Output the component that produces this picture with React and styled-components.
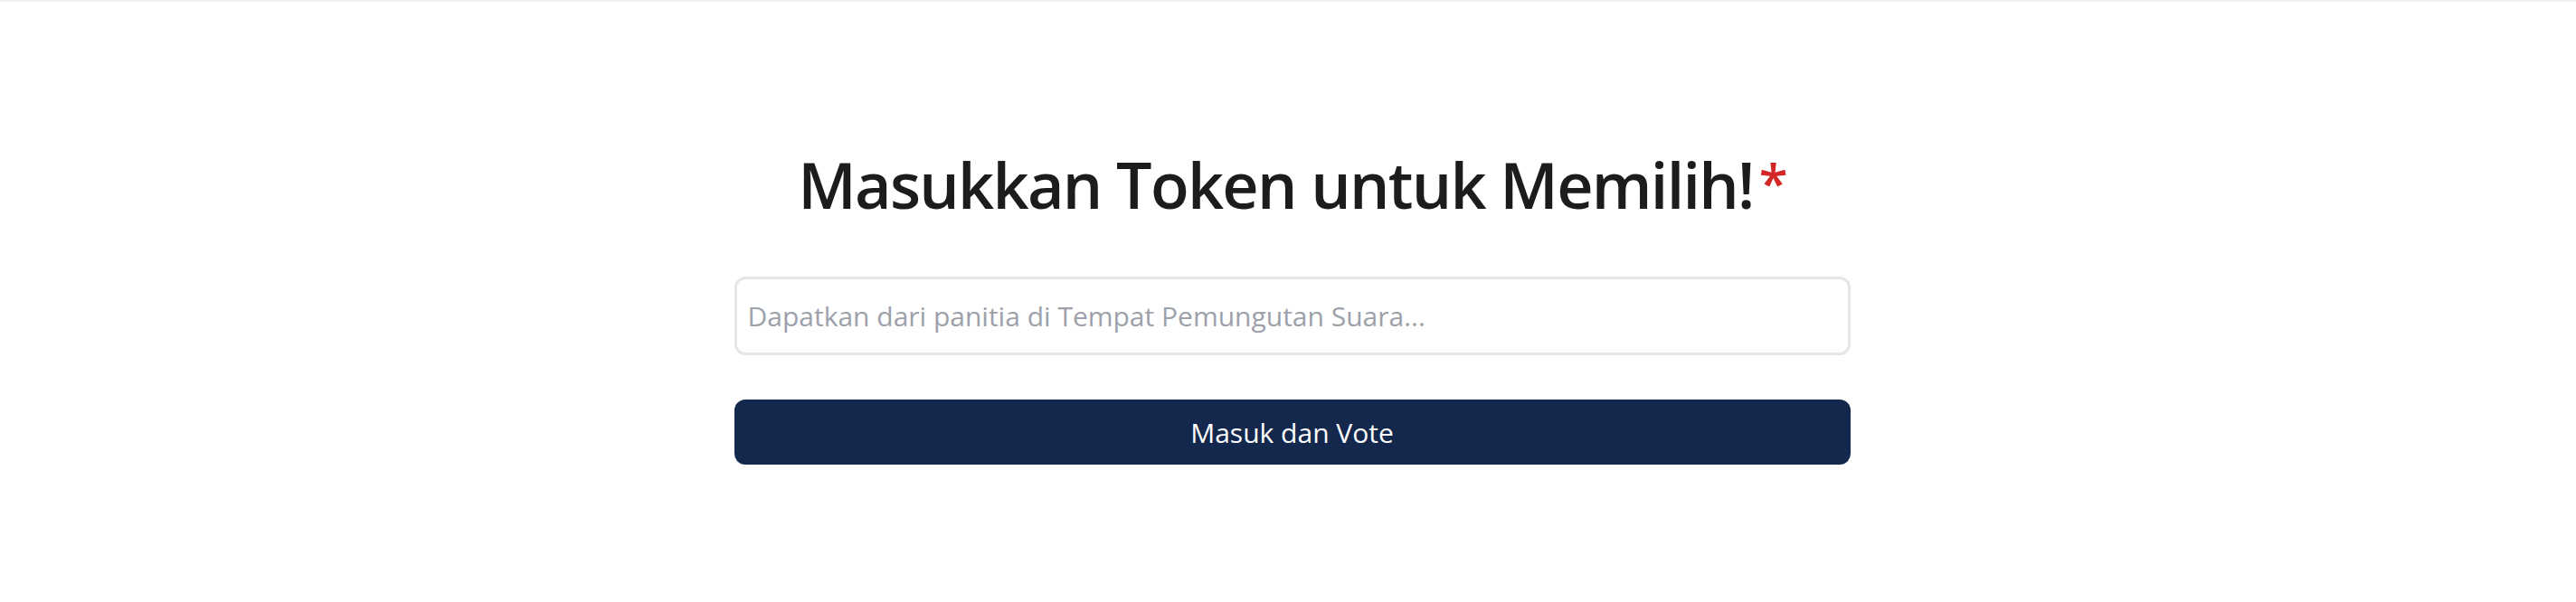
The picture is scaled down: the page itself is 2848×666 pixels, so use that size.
import React from "react";
import styled, { createGlobalStyle } from "styled-components";

const GlobalStyle = createGlobalStyle`
  html, body {
    margin: 0;
    padding: 0;
    background: #ffffff;
  }
  body {
    font-family: "Open Sans", "Noto Sans", sans-serif;
    -webkit-font-smoothing: antialiased;
  }
  * { box-sizing: border-box; }
`;

const Page = styled.div`
  min-height: 666px;
  display: flex;
  flex-direction: column;
`;

const TopEdge = styled.div`
  height: 3px;
  background: linear-gradient(#ececec, #ffffff);
`;

const Main = styled.main`
  display: flex;
  flex-direction: column;
  align-items: center;
  padding: 165px 0 0 9px;
`;

const Title = styled.h1`
  margin: 0;
  font-size: 70px;
  line-height: 72px;
  font-weight: 600;
  color: #1c1c1c;
  letter-spacing: -1.7px;
  text-align: center;
`;

const Required = styled.span`
  color: #d32626;
  font-size: 58px;
  line-height: 0;
  margin-left: 6px;
  vertical-align: 7px;
`;

const Form = styled.form`
  width: 1234px;
  margin-top: 66px;
  display: flex;
  flex-direction: column;
  gap: 49px;
`;

const TokenInput = styled.input`
  height: 87px;
  width: 100%;
  border: 3px solid #e6e6e6;
  border-radius: 12px;
  padding: 0 12px;
  font-family: inherit;
  font-size: 30px;
  color: #1c1c1c;
  background: #ffffff;
  outline: none;
  &::placeholder {
    color: #9ca1aa;
  }
`;

const SubmitButton = styled.button`
  height: 72px;
  width: 100%;
  border: none;
  border-radius: 12px;
  background: #14284e;
  color: #ffffff;
  font-family: inherit;
  font-size: 30px;
  cursor: pointer;
`;

export default function App() {
  return (
    <Page>
      <GlobalStyle />
      <TopEdge />
      <Main>
        <Title>
          Masukkan Token untuk Memilih!<Required>*</Required>
        </Title>
        <Form onSubmit={(e) => e.preventDefault()}>
          <TokenInput
            type="text"
            placeholder="Dapatkan dari panitia di Tempat Pemungutan Suara..."
          />
          <SubmitButton type="submit">Masuk dan Vote</SubmitButton>
        </Form>
      </Main>
    </Page>
  );
}
